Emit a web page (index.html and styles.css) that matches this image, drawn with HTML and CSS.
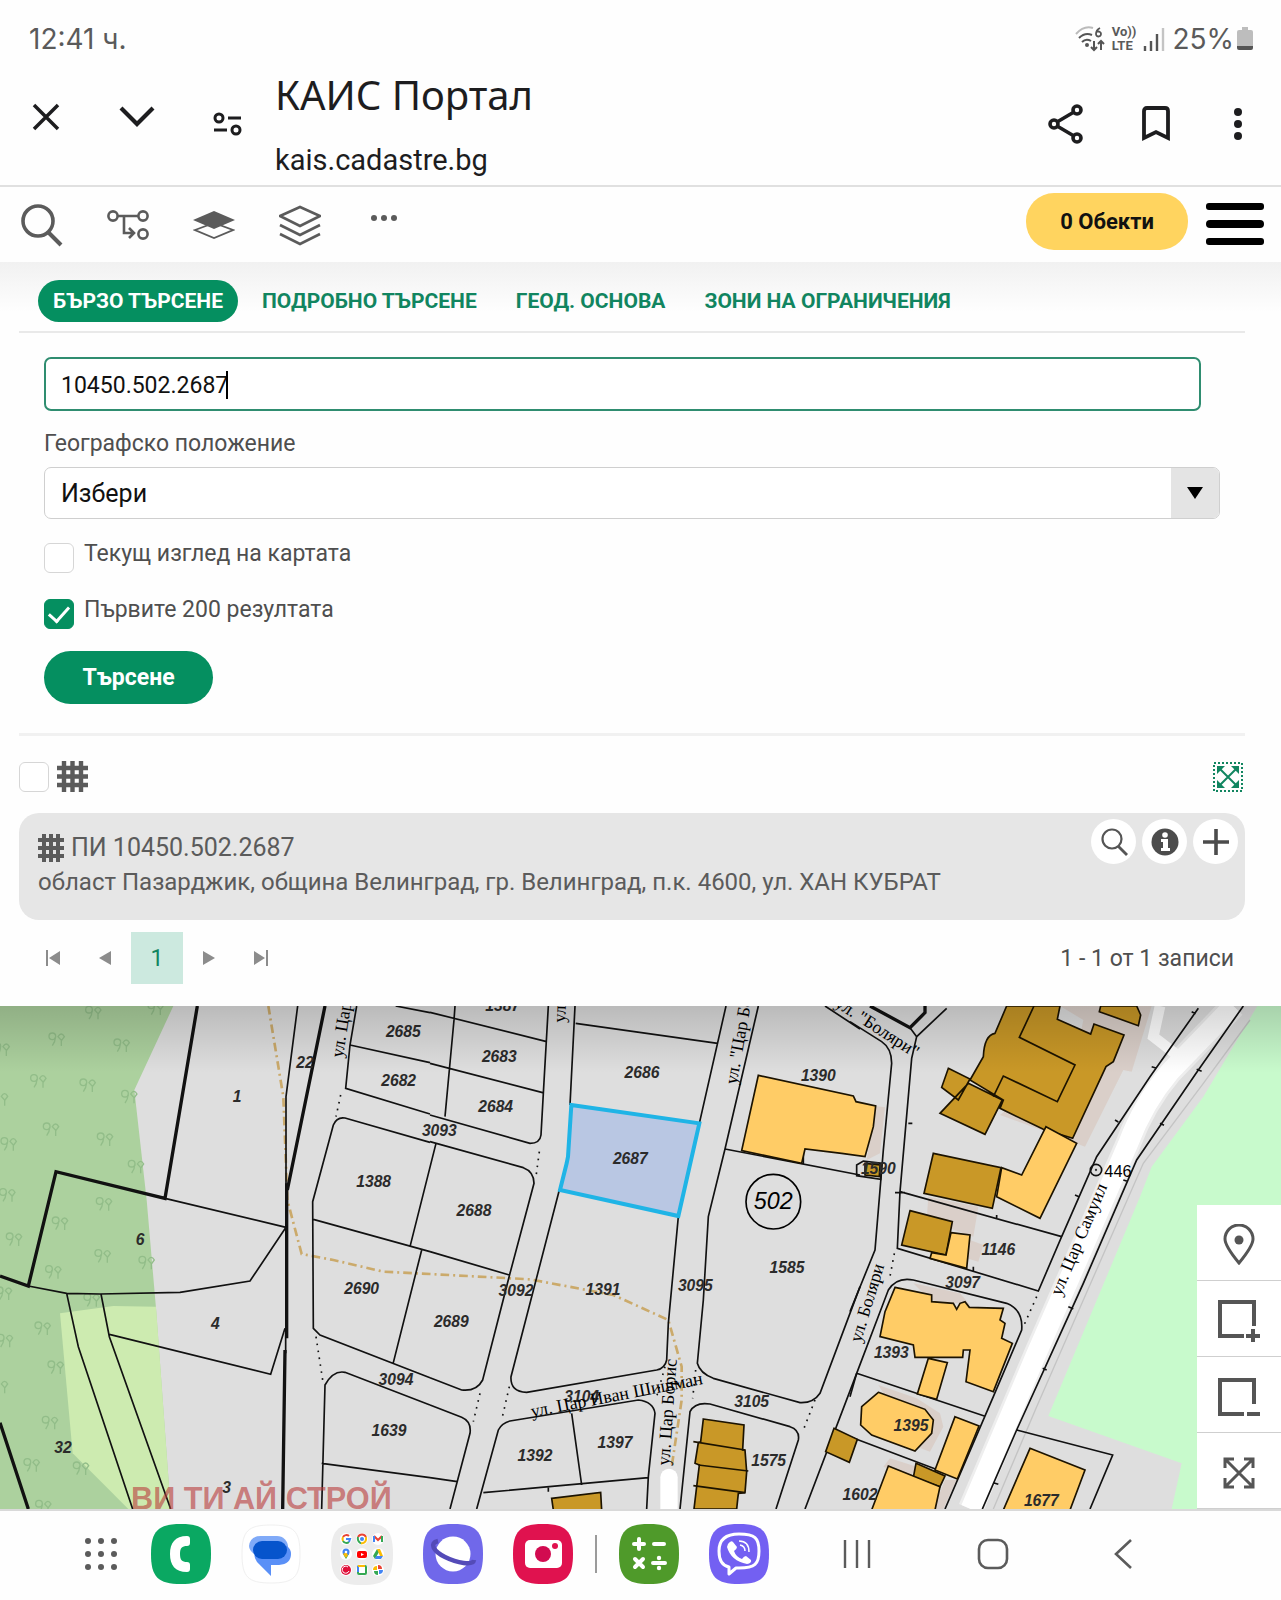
FILE: index.html
```html
<!DOCTYPE html>
<html lang="ru">
<head>
<meta charset="utf-8">
<meta name="viewport" content="width=device-width, initial-scale=1">
<title>КАИС Портал</title>
<link rel="stylesheet" href="styles.css">
</head>
<body>
<div class="status">
  <span>12:41 ч.</span>
  <div class="status-right">
    <svg width="30" height="28" viewBox="0 0 30 28" fill="none" stroke="#555" stroke-width="2">
      <path d="M1 9Q9 0 18 3" stroke="#bbb"/><path d="M4 13q6-6 13-3M7 17q4-4 9-1"/><circle cx="12" cy="20" r="1" fill="#555"/>
      <path d="M25 3q-4 2-4 6a2.500 2.500 0 1 0 1-2" stroke-width="1.800"/><path d="M19 16v9m-3-3 3 3 3-3M26 25v-9m-3 3 3-3 3 3"/>
    </svg>
    <span class="volte"><span>Vo))</span><span>LTE</span></span>
    <svg width="22" height="28" viewBox="0 0 22 28" stroke-width="2.400" stroke="#555"><path d="M2 21v5M8 16v10M14 9v17"/><path d="M20 3v23" stroke="#c4c4c4"/></svg>
    <span>25%</span>
    <svg class="battery" width="16" height="24" viewBox="0 0 16 24"><path fill="#bdbdbd" d="M5 0h6v3h3a2 2 0 0 1 2 2v14H0V5a2 2 0 0 1 2-2h3z"/><path fill="#555" d="M0 19h16v2a2 2 0 0 1-2 2H2a2 2 0 0 1-2-2z"/></svg>
  </div>
</div>

<header class="browser">
  <button class="ic" aria-label="Затвори"><svg width="30" height="30" viewBox="0 0 30 30" fill="none" stroke="#1d1d1f" stroke-width="3.500"><path d="M3 3l24 24M27 3 3 27"/></svg></button>
  <button class="ic" aria-label="Надолу"><svg width="36" height="30" viewBox="0 0 36 30" fill="none" stroke="#1d1d1f" stroke-width="4.200"><path d="M2 6l16 16L34 6"/></svg></button>
  <button class="ic low" aria-label="Настройки на сайта"><svg width="30" height="26" viewBox="0 0 30 26" fill="none" stroke="#1d1d1f" stroke-width="3"><circle cx="6" cy="7" r="4"/><path d="M15 7h13M1 19h13"/><circle cx="23" cy="19" r="4"/></svg></button>
  <div class="site" lang="bg">
    <span class="site-title">КАИС Портал</span>
    <span class="site-url">kais.cadastre.bg</span>
  </div>
  <button class="ic low" aria-label="Сподели"><svg width="36" height="40" viewBox="0 0 36 40" fill="none" stroke="#1d1d1f" stroke-width="3.600"><circle cx="6" cy="20" r="4"/><circle cx="29" cy="6" r="4"/><circle cx="29" cy="34" r="4"/><path d="M9 18 26 8M9 22l17 10"/></svg></button>
  <button class="ic low" aria-label="Отметка"><svg width="28" height="36" viewBox="0 0 28 36" fill="none" stroke="#1d1d1f" stroke-width="3.800"><path d="M2 32V5q0-3 3-3h18q3 0 3 3v27l-12-6z"/></svg></button>
  <button class="ic low more" aria-label="Меню"><svg width="8" height="32" viewBox="0 0 8 32" fill="#1d1d1f"><circle cx="4" cy="4" r="4"/><circle cx="4" cy="16" r="4"/><circle cx="4" cy="28" r="4"/></svg></button>
</header>

<nav class="toolbar">
  <button class="ic" aria-label="Търсене"><svg width="42" height="44" viewBox="0 0 42 44" fill="none" stroke="#5b5b5b" stroke-width="3.600"><circle cx="17" cy="18" r="15"/><path d="m27 29 13 13" stroke-width="4"/></svg></button>
  <button class="ic" aria-label="Маршрут"><svg width="42" height="32" viewBox="0 0 42 32" fill="none" stroke="#5b5b5b" stroke-width="2.600"><circle cx="6" cy="7" r="4.600"/><circle cx="36" cy="7" r="4.600"/><circle cx="36" cy="25" r="4.600"/><path d="M11 7h20M17 7v17h9m-4-5 5 5-5 5"/></svg></button>
  <button class="ic" aria-label="Слой"><svg width="42" height="30" viewBox="0 0 42 30" fill="none" stroke="#5b5b5b" stroke-width="1.800"><path d="M2 20 21 13l19 7-19 8z"/><path d="M0 10 21 1l21 9-21 9z" fill="#5b5b5b" stroke="none"/></svg></button>
  <button class="ic" aria-label="Слоеве"><svg width="42" height="42" viewBox="0 0 42 42" fill="none" stroke="#5b5b5b" stroke-width="2.600"><path d="M1 12 21 3l20 9-20 10zM1 21l20 10 20-10M1 30l20 10 20-10"/></svg></button>
  <button class="ic dots" aria-label="Още"><svg width="26" height="8" viewBox="0 0 26 8" fill="#5b5b5b"><circle cx="3" cy="4" r="3"/><circle cx="13" cy="4" r="3"/><circle cx="23" cy="4" r="3"/></svg></button>
  <button class="objects">0 Обекти</button>
  <button class="ic burger" aria-label="Главно меню"><svg width="58" height="42" viewBox="0 0 58 42"><rect width="58" height="7" rx="3"/><rect y="17" width="58" height="8" rx="4"/><rect y="35" width="58" height="7" rx="3"/></svg></button>
</nav>

<main class="panel">
  <div class="tabs" role="tablist">
    <button class="tab active" role="tab">БЪРЗО ТЪРСЕНЕ</button>
    <button class="tab" role="tab">ПОДРОБНО ТЪРСЕНЕ</button>
    <button class="tab" role="tab">ГЕОД. ОСНОВА</button>
    <button class="tab" role="tab">ЗОНИ НА ОГРАНИЧЕНИЯ</button>
  </div>

  <form class="search">
    <div class="query"><input type="text" aria-label="Идентификатор" value="10450.502.2687"><span class="caret"></span></div>
    <label class="field-label" for="geo">Географско положение</label>
    <div class="select"><select id="geo"><option>Избери</option></select><span class="arrow"><svg width="16" height="12" viewBox="0 0 16 12"><path d="M0 0h16L8 12z"/></svg></span></div>
    <label class="check"><input type="checkbox"><span>Текущ изглед на картата</span></label>
    <label class="check"><input type="checkbox" checked><span>Първите 200 резултата</span></label>
    <button class="submit" type="button">Търсене</button>
  </form>

  <section class="results">
    <div class="results-head">
      <input type="checkbox" aria-label="Избери всички">
      <svg width="31" height="31" viewBox="0 0 31 31" stroke="#5b5b5b" stroke-width="4.400"><path d="M7 0v31M15.500 0v31M24 0v31M0 7h31M0 15.500h31M0 24h31"/></svg>
      <button class="ic extent" aria-label="Покажи всички"><svg width="30" height="30" viewBox="0 0 30 30" fill="none" stroke="#118560"><path d="M1 1h28v28H1z" stroke-width="2" stroke-dasharray="2 2"/><path d="m6 6 18 18M24 6 6 24" stroke-width="2"/><path d="M4 4h8l-8 8zM26 4v8l-8-8zM4 26v-8l8 8zM26 26h-8l8-8z" fill="#118560" stroke="none"/></svg></button>
    </div>
    <article class="card">
      <div class="card-text">
        <div class="card-title"><svg width="26" height="28" viewBox="0 0 26 28" stroke="#5b5b5b" stroke-width="4"><path d="M6 0v28M13 0v28M20 0v28M0 6h26M0 14h26M0 22h26"/></svg><span>ПИ 10450.502.2687</span></div>
        <div class="card-line">област Пазарджик, община Велинград, гр. Велинград, п.к. 4600, ул. ХАН КУБРАТ</div>
      </div>
      <div class="card-actions">
        <button class="round" aria-label="Приближи"><svg width="28" height="28" viewBox="0 0 28 28" fill="none" stroke="#555" stroke-width="2.200"><circle cx="12" cy="11" r="9.500"/><path d="m18 18 9 9" stroke-width="2.800"/></svg></button>
        <button class="round" aria-label="Информация"><svg width="28" height="28" viewBox="0 0 28 28"><circle cx="14" cy="14" r="13.500" fill="#4c4c4c"/><circle cx="14" cy="7" r="2.800" fill="#fff"/><path fill="#fff" d="M10 11h7v9h2v3h-9v-3h2v-6h-2z"/></svg></button>
        <button class="round" aria-label="Добави"><svg width="28" height="28" viewBox="0 0 28 28" stroke="#4c4c4c" stroke-width="3.600"><path d="M14 1v26M1 14h26"/></svg></button>
      </div>
    </article>
    <div class="pager">
      <button class="page" aria-label="Първа"><svg width="14" height="16" viewBox="0 0 14 16" fill="#8c8c8c"><path d="M0 0h2v16H0zM14 1v14L3 8z"/></svg></button>
      <button class="page" aria-label="Предишна"><svg width="12" height="16" viewBox="0 0 12 16" fill="#8c8c8c"><path d="M12 1v14L0 8z"/></svg></button>
      <button class="page current">1</button>
      <button class="page" aria-label="Следваща"><svg width="12" height="16" viewBox="0 0 12 16" fill="#8c8c8c"><path d="M0 1v14l12-7z"/></svg></button>
      <button class="page" aria-label="Последна"><svg width="14" height="16" viewBox="0 0 14 16" fill="#8c8c8c"><path d="M12 0h2v16h-2zM0 1v14l11-7z"/></svg></button>
      <span class="count">1 - 1 от 1 записи</span>
    </div>
  </section>
</main>

<section class="map">
<svg class="plan" viewBox="0 18 3843 1509" preserveAspectRatio="xMidYMin slice">
<defs>
  <g id="tree" fill="none" stroke="#92bd89" stroke-width="4"><circle cx="-13" cy="-9" r="10"/><path d="M-4-6q0 14-9 25M14 20V3L4-8q10-16 19 0l-8 11"/></g>
  <linearGradient id="shade" x1="0" y1="0" x2="0" y2="1"><stop offset="0" stop-color="#000" stop-opacity=".16"/><stop offset="1" stop-color="#000" stop-opacity="0"/></linearGradient>
</defs>
<rect y="18" width="3843" height="1509" fill="#dedede"/>
<path fill="#acd19e" d="M0 18H520L403 270 440 600 468 925 512 1527H0z"/>
<path fill="#cdebb0" d="M180 940 340 918 468 920 512 1527H385L218 1360z"/>
<use href="#tree" x="280" y="38"/><use href="#tree" x="467" y="25"/><use href="#tree" x="170" y="118"/><use href="#tree" x="365" y="136"/><use href="#tree" x="5" y="148"/><use href="#tree" x="115" y="243"/><use href="#tree" x="263" y="256"/><use href="#tree" x="388" y="290"/><use href="#tree" x="0" y="297"/><use href="#tree" x="153" y="388"/><use href="#tree" x="315" y="418"/><use href="#tree" x="26" y="432"/><use href="#tree" x="408" y="500"/><use href="#tree" x="22" y="585"/><use href="#tree" x="312" y="612"/><use href="#tree" x="180" y="670"/><use href="#tree" x="42" y="718"/><use href="#tree" x="308" y="768"/><use href="#tree" x="440" y="788"/><use href="#tree" x="160" y="816"/><use href="#tree" x="12" y="880"/><use href="#tree" x="275" y="900"/><use href="#tree" x="128" y="985"/><use href="#tree" x="15" y="1022"/><use href="#tree" x="167" y="1102"/><use href="#tree" x="0" y="1160"/><use href="#tree" x="150" y="1268"/><use href="#tree" x="95" y="1395"/><use href="#tree" x="243" y="1405"/><use href="#tree" x="130" y="1520"/>

<g transform="translate(2550 0)">
  <path fill="#c8facc" d="M1222 18H1293V1527H965L995 1390 595 1248 870 590 905 500 1060 290z"/>
  <path class="casing" d="M1200 60 1060 250 880 490 700 900 560 1220 430 1527"/>
  <path class="road-edge" d="M1150 18 960 215Q880 310 835 430L700 740 560 1060 362 1527"/>
  <path class="road" d="M1150 18 960 215Q880 310 835 430L700 740 560 1060 362 1527"/>
  <path class="road lane" d="M930 18 910 110 985 168"/>
  <path class="plinth" d="M630 18H905L845 215 820 210 705 440 600 400 450 345 480 320 650 300 700 60zM75 318 105 322 90 460 50 480zM235 590 385 620 370 710 230 660zM360 720 400 735 385 785 350 775zM190 850 330 880 360 915 240 900zM85 1155 200 1195 270 1240 280 1280 240 1355 200 1340zM120 1375 200 1400 180 1430 100 1400zM285 1440 320 1440 280 1527H250z"/>
</g>
<path class="road core" d="M2007 1527V1432"/>

<g class="trail"><path d="M805 18 850 290 862 600 905 762 1000 780 1150 815 1290 822 1590 838 1840 885 2005 960 2045 1100 2045 1200 2015 1400"/></g>

<g class="lines">
  <path class="thick" d="M592 18 495 595 168 515 85 858 0 828M975 18 862 570M860 550V1015M855 1050 848 1527M0 1268 85 1527"/>
  <path d="M495 595 858 682 750 843 540 877 300 882 200 880 85 858M893 18 858 290V560M857 1000V1060M200 880 235 1040 398 1527M303 882 328 1010 512 1527M328 1003 812 1123 855 985M1070 18 1050 135 1037 265 1290 342M1050 135 1290 188M1187 18 1290 38M1290 427 1035 354Q1010 350 1000 375L938 605 940 985 960 1005 1290 1133M940 658 1290 755M1308 430 1230 740M1265 750 1180 1088M1290 1215 1035 1117Q1000 1110 975 1155L965 1527M965 1390 1290 1433"/>
  <path class="dot" d="M1022 285 1008 350M948 1010 968 1140"/>
</g>
<g class="lines" transform="translate(1290 0)">
  <path d="M0 37 350 125M75 18 72 60 58 210 45 350M0 190 338 278M0 345 300 430Q330 430 333 405L340 280 355 18M0 425 280 503Q312 515 312 550L240 820 158 1140Q140 1175 95 1170L0 1133M0 755 238 825M0 1215 95 1252Q125 1265 120 1300L60 1527M0 1433 82 1445M435 18 420 315M437 70 863 130M888 18 808 370M745 650 715 970 710 1080Q705 1105 680 1110L290 1177Q240 1175 243 1130L388 570M985 18 885 447 835 650 820 900 802 1090Q810 1120 850 1135L1110 1208Q1150 1210 1170 1180L1290 860M885 447 1290 525M140 1527 205 1290Q215 1270 240 1263L625 1200Q670 1205 675 1240L655 1430 650 1527M160 1478 655 1433M425 1240 455 1455M750 1527 780 1235Q795 1205 840 1212L1080 1280Q1110 1290 1105 1320L1038 1527M1125 1527 1280 1120M1185 18 1290 87M355 1460V1475M1120 450V490"/>
  <path class="dot" d="M328 455 318 530M150 1180 130 1265M238 1160 215 1260M705 1100 680 1190M797 1110 788 1195M1155 1200 1120 1290"/>
</g>
<g class="lines" transform="translate(2550 0)">
  <path class="thick" d="M60 18 180 83 225 38V18"/>
  <path d="M0 65 95 125Q125 145 125 190L100 450 75 750 0 935M180 83 200 110 290 25M200 110 185 175 150 575 142 745 565 873 635 710 150 575M635 710 740 470 900 230 1045 25M1180 18 1045 210 860 480 700 850 500 1290 397 1527M500 1290 788 1365 720 1527M0 1190 20 1120 115 870Q140 830 190 840L470 910Q520 930 515 990L430 1190 285 1527M20 1120 403 1248M0 1310 290 1420M135 578H165M175 370H187M905 200 920 205M795 360 805 366M675 585 687 590M1025 35 1037 41M1040 208 1055 214M930 370 942 376M820 540 832 544M655 920 670 926M578 1105 590 1110M430 1448 445 1453M440 645V658M370 800V815"/>
  <path class="dot" d="M133 760 118 840M560 890 520 980"/>
  <path d="M20 495 40 483 95 490 92 538 20 527z"/>
  <circle cx="738" cy="510" r="17"/><circle cx="738" cy="510" r="1"/>
</g>

<g class="b" transform="translate(1290 0)">
  <path class="light" d="M985 226 1270 288 1278 305 1337 318 1330 380 1305 470 1235 460 1125 447 1115 490 935 452z"/>
  <path class="dark" d="M820 1257 942 1275 938 1350H945L950 1415 945 1478 925 1480 920 1527H792L800 1460 808 1395 795 1390 805 1328 812 1325zM365 1495 512 1477 515 1530H370zM1212 1285 1282 1318 1258 1387 1187 1355z"/>
  <path fill="none" d="M790 1325 945 1350M805 1395 955 1413M790 1457 945 1478"/>
</g>
<g class="b" transform="translate(2550 0)">
  <path class="dark" d="M470 18 435 100Q403 105 400 170L360 240 460 300 450 325 580 388 668 415 768 200 790 185 822 105 732 72 722 102 622 58 630 18zM295 205 360 237 325 300 275 262zM355 250 457 300 405 403 270 340zM752 18 748 35 865 77 872 45 860 18zM250 460 453 503 427 625 222 580zM180 632 307 665 288 765 155 735zM198 1390 285 1428 270 1460 190 1432zM45 490 90 495 88 530 45 525z"/>
  <path fill="none" d="M552 18 508 112 675 195 622 305 460 228 430 290"/>
  <path class="light" d="M588 380 680 430 570 655 440 590 455 503 515 525zM303 698 360 705 350 805 240 775 245 758 288 765zM135 862 245 885V905L310 910 320 928 330 910 345 905 358 922 460 925 450 960 465 970 455 1015 487 1030 430 1175 348 1145 360 1050H340L338 1072H195L190 1035 90 1010 105 935zM235 1075 292 1088 260 1198 202 1182zM85 1177 225 1228 250 1260 245 1300 195 1353 65 1305 32 1275 35 1220zM315 1250 387 1278 322 1437 255 1410zM115 1398 270 1460 255 1530H65zM540 1345 705 1410 660 1530H460z"/>
</g>

<path class="selected" d="M1714 315 2098 370 2035 648 1680 570 1700 490 1704 470z"/>

<g class="num">
  <text x="711" y="307">1</text><text x="915" y="203">22</text><text x="1210" y="112">2685</text><text x="1196" y="258">2682</text><text x="1121" y="560">1388</text><text x="420" y="734">6</text><text x="1085" y="882">2690</text><text x="646" y="987">4</text><text x="1188" y="1154">3094</text><text x="1167" y="1307">1639</text><text x="189" y="1360">32</text><text x="680" y="1478">3</text>
  <text x="1508" y="32">1387</text><text x="1498" y="186">2683</text><text x="1487" y="337">2684</text><text x="1318" y="407">3093</text><text x="1926" y="235">2686</text><text x="1422" y="647">2688</text><text x="1891" y="491">2687</text><text x="2455" y="244">1390</text><text x="2361" y="819">1585</text><text x="2086" y="872">3095</text><text x="1548" y="888">3092</text><text x="1809" y="884">1391</text><text x="1354" y="980">2689</text><text x="1745" y="1207">3104</text><text x="2255" y="1222">3105</text><text x="1845" y="1344">1397</text><text x="1605" y="1383">1392</text><text x="2306" y="1398">1575</text>
  <text x="2995" y="766">1146</text><text x="2888" y="863">3097</text><text x="2674" y="1074">1393</text><text x="2733" y="1292">1395</text><text x="2580" y="1500">1602</text><text x="3124" y="1518">1677</text><text x="2635" y="522">1590</text>
</g>
<circle cx="2320" cy="605" r="82" fill="none" stroke="#000" stroke-width="5"/>
<text class="quarter" x="2320" y="628">502</text>
<text class="point" x="3313" y="532">446</text>
<g class="street">
  <text transform="translate(3182 890) rotate(-67)">ул. Цар Самуил</text>
  <text transform="translate(2582 1030) rotate(-73)">ул. Боляри</text>
  <text transform="translate(2008 1397) rotate(-86)">ул. Цар Борис</text>
  <text transform="translate(1596 1252) rotate(-11)">ул. Цар Иван Шишман</text>
  <text transform="translate(2210 255) rotate(-80)">ул. "Цар Борис"</text>
  <text transform="translate(1028 175) rotate(-81)">ул. Цар Борис</text>
  <text transform="translate(1696 68) rotate(-88)">ул. Цар</text>
  <text transform="translate(2502 18) rotate(33)">ул. "Боляри"</text>
</g>
<rect y="18" width="3843" height="200" fill="url(#shade)"/>
<text class="mark" x="393" y="1527">ВИ ТИ АЙ СТРОЙ</text>
</svg>
<div class="map-tools">
  <button aria-label="Местоположение"><svg width="32" height="42" viewBox="0 0 32 42" fill="none" stroke="#555" stroke-width="3"><path d="M16 39Q2 22 2 15a14 14 0 0 1 28 0Q30 22 16 39z"/><circle cx="16" cy="16" r="4.500" fill="#555" stroke="none"/></svg></button>
  <button aria-label="Увеличи"><svg width="42" height="42" viewBox="0 0 42 42" fill="none" stroke="#555" stroke-width="4"><path d="M26 36H2V2h34v24M28 36h14M35 29v13"/></svg></button>
  <button aria-label="Намали"><svg width="42" height="38" viewBox="0 0 42 38" fill="none" stroke="#555" stroke-width="4"><path d="M26 36H2V2h34v24M29 36h13"/></svg></button>
  <button aria-label="Цял обхват"><svg width="32" height="32" viewBox="0 0 32 32" fill="none" stroke="#555" stroke-width="3"><path d="m2 2 28 28M30 2 2 30M2 11V2h9M21 2h9v9M30 21v9h-9M11 30H2v-9"/></svg></button>
</div>
</section>

<footer class="dock">
  <div class="apps">
    <svg class="all" width="60" height="60" viewBox="0 0 60 60" fill="#5b5b5b"><circle cx="17" cy="17" r="3"/><circle cx="30" cy="17" r="3"/><circle cx="43" cy="17" r="3"/><circle cx="17" cy="30" r="3"/><circle cx="30" cy="30" r="3"/><circle cx="43" cy="30" r="3"/><circle cx="17" cy="43" r="3"/><circle cx="30" cy="43" r="3"/><circle cx="43" cy="43" r="3"/></svg>
    <svg width="60" height="60" viewBox="0 0 60 60"><path fill="#0aa862" d="M30 0C53 0 60 7 60 30S53 60 30 60 0 53 0 30 7 0 30 0z"/><path fill="#fff" d="M36 12q3 0 3 3v4q0 3-3 3c-5 0-7 2-7 8s2 8 7 8q3 0 3 3v4q0 3-3 3c-12 0-17-7-17-18s5-18 17-18z"/></svg>
    <svg width="60" height="60" viewBox="0 0 60 60"><path fill="#fff" stroke="#f0f0f0" d="M30 1C53 1 59 7 59 30S53 59 30 59 1 53 1 30 7 1 30 1z"/><path fill="#80aaf8" d="M20 12h16a11 11 0 0 1 11 11v7H13Q8 26 8 22q1-10 12-10z"/><path fill="#5a90f7" d="M46 22q4 3 4 8 0 10-12 11h-8v11L16 38q-4-5-2-13z"/><rect x="12" y="17" width="34" height="18" rx="9" fill="#0654cc"/></svg>
    <svg width="62" height="62" viewBox="0 0 62 62"><path fill="#ececec" d="M31 0C55 0 62 7 62 31S55 62 31 62 0 55 0 31 7 0 31 0z"/>
      <g fill="#fff"><circle cx="15" cy="16" r="6"/><circle cx="31" cy="16" r="6"/><circle cx="47" cy="16" r="6"/><circle cx="15" cy="31" r="6"/><circle cx="31" cy="31" r="6"/><circle cx="47" cy="31" r="6"/><circle cx="15" cy="47" r="6"/><circle cx="31" cy="47" r="6"/><circle cx="47" cy="47" r="6"/></g>
      <g fill="none" stroke-width="2"><path stroke="#ea4335" d="M18 13a4 4 0 0 0-6 1"/><path stroke="#fbbc05" d="M12 14q-1 2 0 4"/><path stroke="#34a853" d="M12 18a4 4 0 0 0 6 1"/><path stroke="#4285f4" d="M18 19l1-3h-4"/><path stroke="#ea4335" d="M27 14a4.500 4.500 0 0 1 8 0"/><path stroke="#34a853" d="M27 14q-1 4 3 6.500"/><path stroke="#fbbc05" d="M35 14q1 6-5 6.500"/><path stroke="#ea4335" d="m43 13 4 4 4-4"/><path stroke="#4285f4" d="M43 13v6"/><path stroke="#34a853" d="M51 13v6"/></g>
      <circle cx="31" cy="16" r="2" fill="#4285f4"/><path fill="#34a853" d="M12 31h6l-3 5z"/><circle cx="15" cy="29" r="3.500" fill="#4285f4"/><path fill="#fbbc05" d="M12 31l3-2 2 3-2 3z"/><circle cx="15" cy="29" r="1.300" fill="#fff"/><rect x="26" y="28" width="10" height="7" rx="2" fill="#f00"/><path fill="#fff" d="m30 30 3 1.500-3 1.500z"/><path fill="#34a853" d="m46 26-4 7 2 3 4-7z"/><path fill="#fbbc05" d="M46 26h3l3 7h-3z"/><path fill="#4285f4" d="M45 33h7l-2 3h-6z"/><circle cx="15" cy="47" r="5" fill="#e0103a"/><path fill="none" stroke="#fff" d="M17 44a3.500 3.500 0 1 0 1 4"/><rect x="27" y="43" width="8" height="8" rx="1" fill="none" stroke="#34a853" stroke-width="2"/><path stroke="#4285f4" stroke-width="2" d="M27 43v6"/><path fill="#fbbc05" d="M27 42h7v2h-7z"/><path fill="#ea4335" d="M47 42q4 0 4 4h-4z"/><path fill="#4285f4" d="M52 47q0 4-4 4v-4z"/><path fill="#34a853" d="M47 52q-4 0-4-4h4z"/><path fill="#fbbc05" d="M42 47q0-4 4-4v4z"/></svg>
    <svg width="60" height="60" viewBox="0 0 60 60"><path fill="#7068ea" d="M30 0C53 0 60 7 60 30S53 60 30 60 0 53 0 30 7 0 30 0z"/><circle cx="30" cy="30" r="17.500" fill="#fff"/><path fill="none" stroke="#544bb8" stroke-width="4.500" d="M15 17C6 19 10 27 22 33s28 9 29 3"/></svg>
    <svg width="60" height="60" viewBox="0 0 60 60"><path fill="#e0124f" d="M30 0C53 0 60 7 60 30S53 60 30 60 0 53 0 30 7 0 30 0z"/><rect x="12" y="16" width="37" height="28" rx="5" fill="#fff"/><circle cx="30" cy="30" r="8" fill="#d20b50"/><circle cx="42" cy="22" r="3" fill="#e0124f"/></svg>
    <span class="sep"></span>
    <svg width="60" height="60" viewBox="0 0 60 60"><path fill="#4f9a2a" d="M30 0C53 0 60 7 60 30S53 60 30 60 0 53 0 30 7 0 30 0z"/><path fill="none" stroke="#fff" stroke-width="4" stroke-linecap="round" d="M15 20h10M20 15v10M35 20h10M16 35l8 8M24 35l-8 8M34 39h12"/><circle cx="40" cy="34" r="2.200" fill="#fff"/><circle cx="40" cy="44" r="2.200" fill="#fff"/></svg>
    <svg width="60" height="60" viewBox="0 0 60 60"><path fill="#7360f2" d="M30 0C53 0 60 7 60 30S53 60 30 60 0 53 0 30 7 0 30 0z"/><path fill="none" stroke="#fff" stroke-width="3" stroke-linejoin="round" d="M30 10C46 10 50 14 50 27S46 44 30 44h-3l-7 6v-7Q10 41 10 27 10 10 30 10z"/><path fill="#fff" d="M19 20q3-4 5-2l4 5q0 2-3 4 2 6 8 8 2-3 4-3l5 4q1 3-4 4Q22 37 18 23z"/><path fill="none" stroke="#fff" stroke-width="1.500" d="M30 17q10 0 10 11M31 21q5 1 5 6"/></svg>
  </div>
  <div class="nav">
    <button class="ic" aria-label="Последни"><svg width="30" height="30" viewBox="0 0 30 30" stroke="#5b5b5b" stroke-width="2.400"><path d="M3 1v28M15 1v28M27 1v28"/></svg></button>
    <button class="ic" aria-label="Начало"><svg width="32" height="32" viewBox="0 0 32 32" fill="none" stroke="#5b5b5b" stroke-width="2.600"><rect x="2" y="2" width="28" height="28" rx="9"/></svg></button>
    <button class="ic" aria-label="Назад"><svg width="18" height="32" viewBox="0 0 18 32" fill="none" stroke="#5b5b5b" stroke-width="2.600"><path d="M17 2 2 16l15 14"/></svg></button>
  </div>
</footer>
</body>
</html>
```
FILE: styles.css
```css
* { box-sizing: border-box; }
body {
  margin: 0;
  min-height: 100vh;
  display: flex;
  flex-direction: column;
  background: #fefefe;
  color: #4f4f4f;
  font-family: Roboto, "Noto Sans", sans-serif;
  font-size: 23px;
}
button, input, select { font: inherit; color: inherit; margin: 0; }
button { border: 0; padding: 0; background: none; }
svg { display: block; flex: none; }
.ic { display: flex; align-items: center; justify-content: center; }

.status {
  display: flex;
  justify-content: space-between;
  align-items: center;
  height: 77px;
  padding: 0 28px 0 29px;
  font-family: Inter, Roboto, sans-serif;
  font-size: 28px;
  color: #5a5a5a;
}
.status-right { display: flex; align-items: center; gap: 7px; }
.volte {
  display: flex;
  flex-direction: column;
  font-family: Roboto, sans-serif;
  font-size: 13px;
  line-height: 14px;
  font-weight: 700;
}
.battery { margin-left: -4px; }

.browser {
  display: flex;
  align-items: center;
  height: 110px;
  padding: 0 39px 0 31px;
  border-bottom: 2px solid #e0e0e0;
  color: #1d1d1f;
}
.browser .ic { height: 80px; padding-bottom: 28px; }
.browser .ic + .ic { margin-left: 58px; }
.browser .low { padding-bottom: 14px; }
.browser .ic.more { margin-left: 64px; }
.site {
  flex: 1;
  align-self: stretch;
  display: flex;
  flex-direction: column;
  margin-left: 32px;
}
.site-title {
  margin-top: -8px;
  font-family: "Noto Sans", Roboto, sans-serif;
  font-size: 40px;
  line-height: 52px;
}
.site-url { margin-top: 22px; font-size: 29px; line-height: 34px; }

.toolbar {
  display: flex;
  align-items: center;
  gap: 44px;
  height: 75px;
  padding: 0 17px 0 21px;
}
.dots { margin: 0 auto 13px 6px; }
.objects {
  width: 162px;
  height: 57px;
  margin: 0 -26px 6px 0;
  border-radius: 28px;
  background: #ffd45f;
  color: #111;
  font-weight: 700;
  font-size: 22px;
}
.burger { margin-bottom: 2px; }

.panel {
  padding: 18px 36px 0 19px;
  background: linear-gradient(#f1f1f1, #fefefe 50px);
}
.tabs {
  display: flex;
  gap: 9px;
  padding: 0 19px 9px;
  border-bottom: 2px solid #e9e9e9;
}
.tab {
  height: 42px;
  padding: 0 15px;
  border-radius: 21px;
  font-size: 21px;
  font-weight: 700;
  color: #118560;
  white-space: nowrap;
}
.tab.active { background: #058f60; color: #fff; }

.search {
  display: flex;
  flex-direction: column;
  padding: 24px 25px 29px;
  border-bottom: 3px solid #f1f1f1;
}
.query { position: relative; margin-right: 19px; }
.query input {
  display: block;
  width: 100%;
  height: 54px;
  padding: 2px 15px 0;
  border: 2px solid #2f8d70;
  border-radius: 7px;
  background: #fff;
  color: #111;
  outline: 0;
}
.caret {
  position: absolute;
  left: 182px;
  top: 14px;
  width: 2px;
  height: 28px;
  background: #000;
}
.field-label { margin: 19px 0 9px; line-height: 28px; }
.select { position: relative; }
.select select {
  display: block;
  width: 100%;
  height: 52px;
  padding: 0 64px 0 16px;
  border: 1px solid #cfcfcf;
  border-radius: 7px;
  appearance: none;
  background: #fff;
  color: #111;
  font-size: 25px;
}
.arrow {
  position: absolute;
  inset: 1px 1px 1px auto;
  width: 48px;
  display: flex;
  align-items: center;
  justify-content: center;
  border-radius: 0 6px 6px 0;
  background: #e4e4e4;
}
input[type="checkbox"] {
  appearance: none;
  flex: none;
  width: 30px;
  height: 30px;
  border: 1px solid #d6d6d6;
  border-radius: 6px;
  background: #fff;
}
input[type="checkbox"]:checked { border-color: #058f60; background: #058f60; }
input[type="checkbox"]:checked::after {
  content: "";
  display: block;
  width: 9px;
  height: 17px;
  margin: 2px auto;
  border: solid #fff;
  border-width: 0 3px 3px 0;
  transform: rotate(42deg);
}
.check {
  display: flex;
  align-items: flex-end;
  gap: 10px;
  height: 30px;
  margin-top: 24px;
}
.check + .check { margin-top: 26px; }
.check span { align-self: flex-start; line-height: 22px; }
.submit {
  align-self: flex-start;
  width: 169px;
  height: 53px;
  margin-top: 22px;
  border-radius: 27px;
  background: #058f60;
  color: #fff;
  font-weight: 700;
}

.results-head {
  display: flex;
  align-items: center;
  gap: 8px;
  padding: 25px 2px 21px 0;
}
.extent { margin-left: auto; }
.card {
  display: flex;
  align-items: flex-start;
  justify-content: space-between;
  height: 107px;
  padding: 6px 7px 0 19px;
  border-radius: 20px;
  background: #e6e6e6;
  color: #5b5b5b;
  font-size: 24px;
  line-height: 34px;
}
.card-text { flex: 0 0 77%; overflow: hidden; padding-top: 12px; }
.card-title { display: flex; align-items: center; gap: 7px; font-size: 25px; }
.card-line { white-space: nowrap; }
.card-actions { display: flex; gap: 6px; }
.round {
  width: 45px;
  height: 45px;
  display: flex;
  align-items: center;
  justify-content: center;
  border-radius: 50%;
  background: #fff;
}
.pager {
  display: flex;
  align-items: center;
  padding: 12px 11px 22px 8px;
}
.page {
  width: 52px;
  height: 52px;
  display: flex;
  align-items: center;
  justify-content: center;
}
.current { background: #cce9df; color: #118560; }
.count { margin-left: auto; }

.map { position: relative; border-bottom: 2px solid #d9d9d9; }
.plan { width: 100%; height: auto; overflow: hidden; }
.map-tools {
  position: absolute;
  right: 0;
  bottom: 0;
  width: 84px;
  background: #fff;
}
.map-tools button {
  width: 100%;
  height: 76px;
  padding-top: 4px;
  display: flex;
  align-items: center;
  justify-content: center;
  border-bottom: 1px solid #cfcfcf;
}
.lines { fill: none; stroke: #111; stroke-width: 5; }
.lines .thick { stroke-width: 10; }
.lines .dot { stroke-dasharray: 5 16; }
.trail { fill: none; stroke: #cbaa6b; stroke-width: 8; stroke-dasharray: 26 12 6 12; }
.road { fill: none; stroke: #fff; stroke-width: 60; }
.road-edge { fill: none; stroke: #eee; stroke-width: 76; }
.casing { fill: none; stroke: #c4c4c4; stroke-width: 4; }
.lane { stroke-width: 32; }
.core { stroke-width: 52; stroke-linecap: round; }
.plinth { fill: #dacfc9; }
.b { stroke: #1c1300; stroke-width: 5; }
.dark { fill: #c99827; }
.light { fill: #ffcc66; }
.selected { fill: #b9c7e3; stroke: #1fb4e6; stroke-width: 12; }
.num {
  font: italic 700 47px "Liberation Sans", Arial, sans-serif;
  text-anchor: middle;
  fill: #2b2b2b;
}
.quarter { font: italic 70px "Liberation Sans", Arial, sans-serif; text-anchor: middle; }
.point { font: 49px "Liberation Sans", Arial, sans-serif; }
.street { font: 54px "Liberation Serif", "Times New Roman", serif; }
.mark { font: 700 92px "Liberation Sans", Arial, sans-serif; fill: #b93c3c; fill-opacity: .62; }

.dock {
  flex: 1;
  display: flex;
  align-items: center;
  justify-content: space-between;
  min-height: 88px;
  padding: 0 149px 3px 71px;
  background: #fefefe;
}
.apps { display: flex; align-items: center; gap: 30px; }
.all { margin-right: -10px; }
.sep { width: 2px; height: 38px; margin: 0 -8px; background: #9b9b9b; }
.nav { display: flex; align-items: center; gap: 105px; }
```
